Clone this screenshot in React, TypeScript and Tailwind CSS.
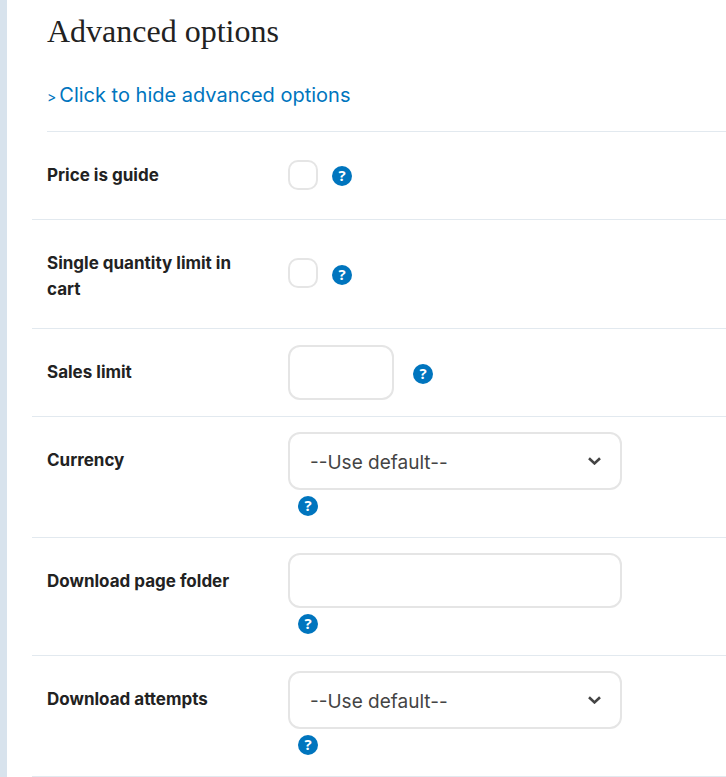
import type { ReactNode } from "react";
import clsx from "clsx";

// ─── Shared classes ──────────────────────────────────────────────────────────

const FIELD =
  "block rounded-xl border-2 border-[#e5e5e5] bg-white text-[19px] text-[#444] outline-none focus:border-[#0075be]";

const CHECKBOX =
  "size-[30px] shrink-0 appearance-none rounded-[10px] border-2 border-[#e5e5e5] bg-white checked:bg-[#0075be]";

// ─── Help button ─────────────────────────────────────────────────────────────

function HelpButton({ topic }: { topic: string }) {
  return (
    <button
      type="button"
      aria-label={`Help: ${topic}`}
      className="mt-[3px] flex size-5 shrink-0 items-center justify-center rounded-full bg-[#0075be] font-['Open_Sans',sans-serif] text-[15px] leading-[18px] font-bold text-white"
    >
      <span className="pb-0.5">?</span>
    </button>
  );
}

// ─── Select ──────────────────────────────────────────────────────────────────

function DefaultSelect({ id, options }: { id: string; options: string[] }) {
  return (
    <div className="relative">
      <select id={id} className={clsx(FIELD, "h-[58px] w-full appearance-none pt-1 pr-12 pl-5")}>
        <option value="">--Use default--</option>
        {options.map((o) => (
          <option key={o}>{o}</option>
        ))}
      </select>
      <svg
        className="pointer-events-none absolute top-1/2 right-5 h-2 w-3.5 -translate-y-1/2"
        viewBox="0 0 14 8"
        fill="none"
        stroke="#444"
        strokeWidth={2.6}
      >
        <path d="M1 1.2 6.5 6.4 12 1.2" />
      </svg>
    </div>
  );
}

// ─── Row ─────────────────────────────────────────────────────────────────────

function OptionRow({
  id,
  label,
  stacked = false,
  wide = false,
  children,
}: {
  id: string;
  label: string;
  /** Puts the help button under the field instead of beside it. */
  stacked?: boolean;
  /** Wider gap between a text field and its help button. */
  wide?: boolean;
  children: ReactNode;
}) {
  return (
    <div className="flex min-h-22 border-b border-[#e2e9ef] pl-[15px]">
      <div className="w-[241px] shrink-0 pt-[30px] pr-10 pb-[26px]">
        <label htmlFor={id} className="block text-[17px] leading-[26px] font-bold text-[#222]">
          {label}
        </label>
      </div>
      {stacked ? (
        <div className="max-w-[334px] grow pt-[15px] pb-[21px]">
          {children}
          <div className="flex pt-[3px] pl-2.5">
            <HelpButton topic={label} />
          </div>
        </div>
      ) : (
        <div className={clsx("flex items-center", wide ? "gap-[19px]" : "gap-3.5 pb-0.5")}>
          {children}
          <HelpButton topic={label} />
        </div>
      )}
    </div>
  );
}

// ─── Page ────────────────────────────────────────────────────────────────────

export default function App() {
  return (
    <main className="min-h-screen border-l-[7px] border-[#d8e3ed] bg-white pl-[25px] font-['Inter',sans-serif]">
      <div className="ml-[15px] border-b border-[#e2e9ef]">
        <h2 className="pt-[11px] font-['Liberation_Serif',serif] text-[32px] leading-10 text-[#222]">
          Advanced options
        </h2>
        <p className="pt-[29px] pb-[21px] text-xl leading-[30px] text-[#0075be]">
          <a href="#advanced" className="flex items-baseline gap-[3px]">
            <span className="text-sm leading-none">&gt;</span>
            Click to hide advanced options
          </a>
        </p>
      </div>

      <form id="advanced">
        <OptionRow id="price-guide" label="Price is guide">
          <input id="price-guide" type="checkbox" className={CHECKBOX} />
        </OptionRow>
        <OptionRow id="single-quantity" label="Single quantity limit in cart">
          <input id="single-quantity" type="checkbox" className={CHECKBOX} />
        </OptionRow>
        <OptionRow id="sales-limit" label="Sales limit" wide>
          <input id="sales-limit" type="text" className={clsx(FIELD, "h-[55px] w-[106px] px-5")} />
        </OptionRow>
        <OptionRow id="currency" label="Currency" stacked>
          <DefaultSelect id="currency" options={["AUD", "EUR", "GBP", "USD"]} />
        </OptionRow>
        <OptionRow id="page-folder" label="Download page folder" stacked>
          <input id="page-folder" type="text" className={clsx(FIELD, "h-[55px] w-full px-5")} />
        </OptionRow>
        <OptionRow id="attempts" label="Download attempts" stacked>
          <DefaultSelect id="attempts" options={["1", "3", "5", "10"]} />
        </OptionRow>
      </form>
    </main>
  );
}
